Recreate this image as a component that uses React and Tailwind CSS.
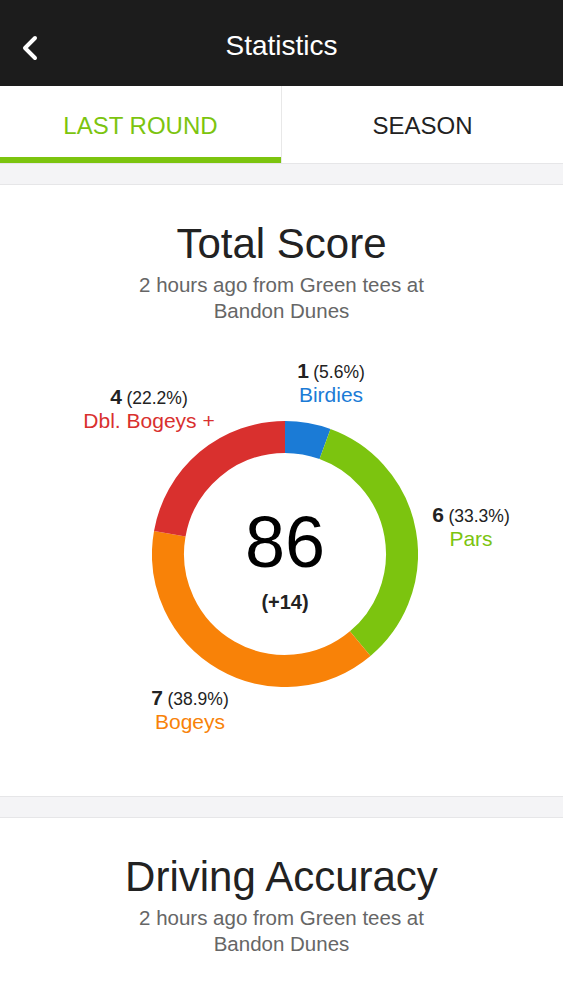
import React from "react";

const segments = [
  { from: 0, to: 20, color: "#1b7bd6" },
  { from: 20, to: 140, color: "#7cc40f" },
  { from: 140, to: 280, color: "#f88208" },
  { from: 280, to: 360, color: "#d9302e" }
];

const arc = (cx, cy, r, a0, a1) => {
  const p = (a) => {
    const rad = (a * Math.PI) / 180;
    return [cx + r * Math.sin(rad), cy - r * Math.cos(rad)];
  };
  const [x0, y0] = p(a0);
  const [x1, y1] = p(a1);
  const large = a1 - a0 > 180 ? 1 : 0;
  return `M ${x0} ${y0} A ${r} ${r} 0 ${large} 1 ${x1} ${y1}`;
};

const labels = [
  { left: 331, top: 21, count: "1", pct: "(5.6%)", name: "Birdies", color: "text-[#1b7bd6]" },
  { left: 149, top: 47, count: "4", pct: "(22.2%)", name: "Dbl. Bogeys +", color: "text-[#d9302e]" },
  { left: 471, top: 165, count: "6", pct: "(33.3%)", name: "Pars", color: "text-[#7cc40f]" },
  { left: 190, top: 348, count: "7", pct: "(38.9%)", name: "Bogeys", color: "text-[#f88208]" }
];

const CardHeader = ({ title }) => (
  <div className="flex flex-col items-center">
    <h2 className="text-[42px] leading-[46px] text-[#222]">{title}</h2>
    <p className="mt-[5px] text-center text-[20.5px] leading-[26px] text-[#666]">
      2 hours ago from Green tees at
      <br />
      Bandon Dunes
    </p>
  </div>
);

const Band = () => (
  <div className="h-[22px] bg-[#f4f4f6] border-y border-[#e6e6e8]" />
);

export default function App() {
  return (
    <div
      className="w-full min-h-[1000px] bg-white overflow-hidden"
      style={{ fontFamily: '"Liberation Sans", Arial, sans-serif' }}
    >
      {/* HEADER */}
      <header className="relative h-[86px] bg-[#1c1c1c] flex items-center justify-center">
        <button className="absolute left-[18px] top-[32px] w-[24px] h-[32px] flex items-center justify-center">
          <svg width="18" height="26" viewBox="0 0 18 26" fill="none">
            <path d="M14 3 L4 13 L14 23" stroke="white" strokeWidth="4" strokeLinecap="round" strokeLinejoin="round" />
          </svg>
        </button>
        <h1 className="text-white text-[28px] leading-none pt-[6px]">Statistics</h1>
      </header>

      {/* TABS */}
      <div className="flex h-[77px] bg-white">
        <div className="relative flex-1 flex items-center justify-center border-r border-[#e8e8e8]">
          <span className="text-[24px] text-[#7cc40f] pt-[2px]">LAST ROUND</span>
          <div className="absolute left-0 right-0 bottom-0 h-[6px] bg-[#7cc40f]" />
        </div>
        <div className="flex-1 flex items-center justify-center">
          <span className="text-[24px] text-[#222] pt-[2px]">SEASON</span>
        </div>
      </div>

      <Band />

      {/* TOTAL SCORE */}
      <section className="pt-[36px] pb-[36px]">
        <CardHeader title="Total Score" />
        <div className="relative h-[421px] mt-[15px]">
          <svg className="absolute left-[152px] top-[82px]" width="266" height="266" viewBox="0 0 266 266">
            {segments.map((s, i) => (
              <path key={i} d={arc(133, 133, 117, s.from, s.to)} stroke={s.color} strokeWidth="32" fill="none" />
            ))}
          </svg>
          <div className="absolute left-[152px] top-[82px] w-[266px] h-[266px] flex flex-col items-center justify-center">
            <div className="text-[72px] leading-none text-black mt-[14px]">86</div>
            <div className="text-[20px] font-bold text-[#222] mt-[9px]">(+14)</div>
          </div>
          {labels.map((l) => (
            <div
              key={l.name}
              className="absolute -translate-x-1/2 text-center whitespace-nowrap leading-[22px]"
              style={{ left: l.left, top: l.top }}
            >
              <div className="text-[#222]">
                <span className="text-[21px] font-bold">{l.count}</span>{" "}
                <span className="text-[17.5px]">{l.pct}</span>
              </div>
              <div className={`text-[21px] ${l.color}`}>{l.name}</div>
            </div>
          ))}
        </div>
      </section>

      <Band />

      {/* DRIVING ACCURACY */}
      <section className="pt-[36px] pb-[36px]">
        <CardHeader title="Driving Accuracy" />
      </section>
    </div>
  );
}
